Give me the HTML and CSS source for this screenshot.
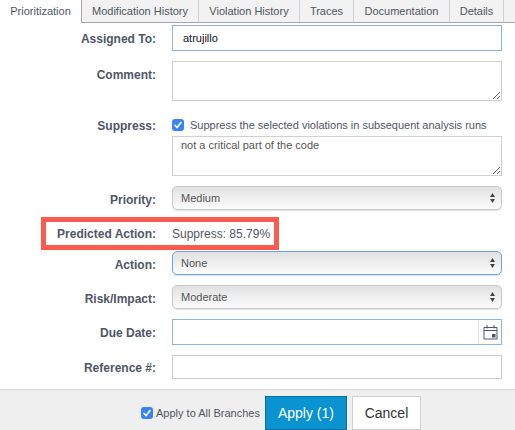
FILE: index.html
```html
<!DOCTYPE html>
<html lang="en">
<head>
<meta charset="utf-8">
<title>Prioritization</title>
<link rel="stylesheet" href="styles.css">
</head>
<body>
<div class="panel">
  <nav class="tabs">
    <a class="tab tab-active tab-w1">Prioritization</a>
    <a class="tab tab-w2">Modification History</a>
    <a class="tab tab-w3">Violation History</a>
    <a class="tab tab-w4">Traces</a>
    <a class="tab tab-w5">Documentation</a>
    <a class="tab tab-w6">Details</a>
    <span class="tab-rest"></span>
  </nav>
  <form class="form">
    <div class="row row-assigned">
      <label class="label">Assigned To:</label>
      <input class="field field-focus field-text" type="text" value="atrujillo">
    </div>
    <div class="row row-comment">
      <label class="label">Comment:</label>
      <textarea class="area"></textarea>
    </div>
    <div class="row row-suppress">
      <label class="label">Suppress:</label>
      <div class="suppress">
        <div class="check-line">
          <span class="check"><svg viewBox="0 0 12 12" width="12" height="12"><path d="M3 6.3 5.1 8.6 9 3.6" fill="none" stroke="#fff" stroke-width="1.6" stroke-linecap="round" stroke-linejoin="round"/></svg></span>
          <span class="check-text">Suppress the selected violations in subsequent analysis runs</span>
        </div>
        <textarea class="area area-reason">not a critical part of the code</textarea>
      </div>
    </div>
    <div class="row row-priority">
      <label class="label">Priority:</label>
      <div class="select">
        <select class="select-box"><option>Medium</option></select>
        <svg class="arrows" viewBox="0 0 5 10" width="5" height="10"><path d="M2.5 0 5 4H0ZM2.5 10 0 6H5Z" fill="#444"/></svg>
      </div>
    </div>
    <div class="row row-predicted">
      <label class="label">Predicted Action:</label>
      <span class="value">Suppress: 85.79%</span>
      <span class="callout"></span>
    </div>
    <div class="row row-action">
      <label class="label">Action:</label>
      <div class="select">
        <select class="select-box select-focus"><option>None</option></select>
        <svg class="arrows" viewBox="0 0 5 10" width="5" height="10"><path d="M2.5 0 5 4H0ZM2.5 10 0 6H5Z" fill="#444"/></svg>
      </div>
    </div>
    <div class="row row-risk">
      <label class="label">Risk/Impact:</label>
      <div class="select">
        <select class="select-box"><option>Moderate</option></select>
        <svg class="arrows" viewBox="0 0 5 10" width="5" height="10"><path d="M2.5 0 5 4H0ZM2.5 10 0 6H5Z" fill="#444"/></svg>
      </div>
    </div>
    <div class="row row-due">
      <label class="label">Due Date:</label>
      <div class="date field-focus">
        <input class="date-input" type="text">
        <span class="date-btn"><svg viewBox="0 0 15 16" width="15" height="16"><path d="M1 3.5H14V15H1ZM1 6.5H14M4 1V4.5M11 1V4.5" fill="none" stroke="#4f5666" stroke-width="1"/><rect x="9" y="10" width="3.5" height="3.5" fill="#4f5666"/></svg></span>
      </div>
    </div>
    <div class="row row-ref">
      <label class="label">Reference #:</label>
      <input class="field" type="text">
    </div>
  </form>
  <footer class="footer">
    <span class="check"><svg viewBox="0 0 12 12" width="12" height="12"><path d="M3 6.3 5.1 8.6 9 3.6" fill="none" stroke="#fff" stroke-width="1.6" stroke-linecap="round" stroke-linejoin="round"/></svg></span>
    <span class="branches">Apply to All Branches</span>
    <button class="btn btn-primary" type="button">Apply (1)</button>
    <button class="btn btn-default" type="button">Cancel</button>
  </footer>
</div>
</body>
</html>
```
FILE: styles.css
```css
* { box-sizing: border-box; }
html, body { margin: 0; padding: 0; height: 100%; background: #fff; }
body { font-family: "Liberation Sans", Arial, sans-serif; font-size: 11px; color: #4f5666; overflow: hidden; }
.panel { width: 515px; height: 430px; display: flex; flex-direction: column; }

.tabs { display: flex; height: 23px; flex: none; }
.tab { display: flex; align-items: center; justify-content: center; height: 23px; background: #f2f2f2; border-left: 1px solid #d0d0d0; border-bottom: 1px solid #a9a9a9; color: #50565f; font-size: 11px; padding-bottom: 1px; }
.tab-active { background: #fff; border-left: 0; border-bottom: 0; border-right: 1px solid #a9a9a9; }
.tab-w1 { width: 82px; }
.tab-w2 { width: 116px; border-left: 0; }
.tab-w3 { width: 101px; }
.tab-w4 { width: 54px; }
.tab-w5 { width: 96px; }
.tab-w6 { width: 54px; }
.tab-rest { flex: 1; background: #f2f2f2; border-left: 1px solid #d0d0d0; border-bottom: 1px solid #a9a9a9; }

.form { flex: 1; padding-top: 2px; }
.row { display: grid; grid-template-columns: 156px 330px; column-gap: 16px; position: relative; }
.label { font-size: 12px; font-weight: 700; color: #4f5666; text-align: right; line-height: 14px; }

.row-assigned { height: 26px; align-items: center; }
.row-assigned .label { margin-top: 1px; }
.row-comment { height: 40px; margin-top: 10px; }
.row-comment .label { margin-top: 7px; }
.row-suppress { height: 58px; margin-top: 17px; }
.row-suppress .label { margin-top: 1px; }
.row-priority { height: 24px; margin-top: 10px; align-items: center; }
.row-priority .label { margin-top: 3px; }
.row-predicted { height: 24px; margin-top: 10px; align-items: center; }
.row-predicted .label, .row-predicted .value { margin-top: 3px; }
.row-action { height: 24px; margin-top: 7px; align-items: center; }
.row-action .label { margin-top: 3px; }
.row-risk { height: 24px; margin-top: 10px; align-items: center; }
.row-risk .label { margin-top: 3px; }
.row-due { height: 26px; margin-top: 10px; align-items: center; }
.row-due .label { margin-top: 1px; }
.row-ref { height: 24px; margin-top: 10px; align-items: center; }
.row-ref .label { margin-top: 1px; }

.field { width: 330px; height: 100%; border: 1px solid #ccc; background: #fff; padding: 0 8px; font: 11px "Liberation Sans", Arial, sans-serif; color: #111; outline: 0; border-radius: 0; }
.field-focus { border: 1px solid #8fb4d9; }
.field-text { padding-left: 10px; }
.area { display: block; width: 330px; height: 40px; border: 1px solid #d0d0d0; background: #fff; padding: 1px 8px; font: 11px/14px "Liberation Sans", Arial, sans-serif; color: #555; outline: 0; border-radius: 0; resize: both; margin: 0; }
.area-reason { margin-top: 5px; }

.suppress { display: flex; flex-direction: column; }
.check-line { display: flex; align-items: center; height: 12px; gap: 6px; margin-top: 1px; }
.check { display: block; flex: none; width: 12px; height: 12px; background: #3b82f6; border-radius: 3px; }
.check svg { display: block; }
.check-text { font-size: 11px; color: #50565f; white-space: nowrap; }

.select { position: relative; width: 330px; height: 24px; }
.select-box { display: block; width: 100%; height: 100%; appearance: none; -webkit-appearance: none; border: 1px solid #c9c9c9; border-radius: 5px; background: linear-gradient(#e1e1e1, #f4f4f4 70%, #fbfbfb); padding: 0 8px; font: 11px "Liberation Sans", Arial, sans-serif; color: #555; outline: 0; box-shadow: 0 1px 1px rgba(0,0,0,.12); }
.select-focus { border-color: #6aa6e0; }
.arrows { position: absolute; right: 7px; top: 7px; }

.value { font-size: 12px; color: #4f5666; white-space: nowrap; }
.callout { position: absolute; left: 41px; top: -3px; width: 238px; height: 33px; border: 5px solid #ff5a4d; pointer-events: none; }

.date { display: flex; width: 330px; height: 100%; background: #fff; }
.date-input { flex: 1; min-width: 0; border: 0; outline: 0; padding: 0 8px; background: transparent; }
.date-btn { display: flex; align-items: center; justify-content: center; width: 23px; border-left: 1px solid #ddd; }

.footer { height: 41px; flex: none; display: flex; align-items: center; background: #efefef; border-top: 1px solid #d8d8d8; padding: 5px 0 0 141px; }
.branches { font-size: 11px; color: #50565f; margin-left: 3px; margin-right: 5px; white-space: nowrap; }
.btn { height: 34px; font: 14px "Liberation Sans", Arial, sans-serif; border-radius: 0; padding: 0; }
.btn-primary { width: 82px; background: #0a93d1; border: 1px solid #0a6f9f; color: #fff; }
.btn-default { width: 69px; margin-left: 5px; background: #fff; border: 1px solid #d0d0d0; color: #333; }
```
